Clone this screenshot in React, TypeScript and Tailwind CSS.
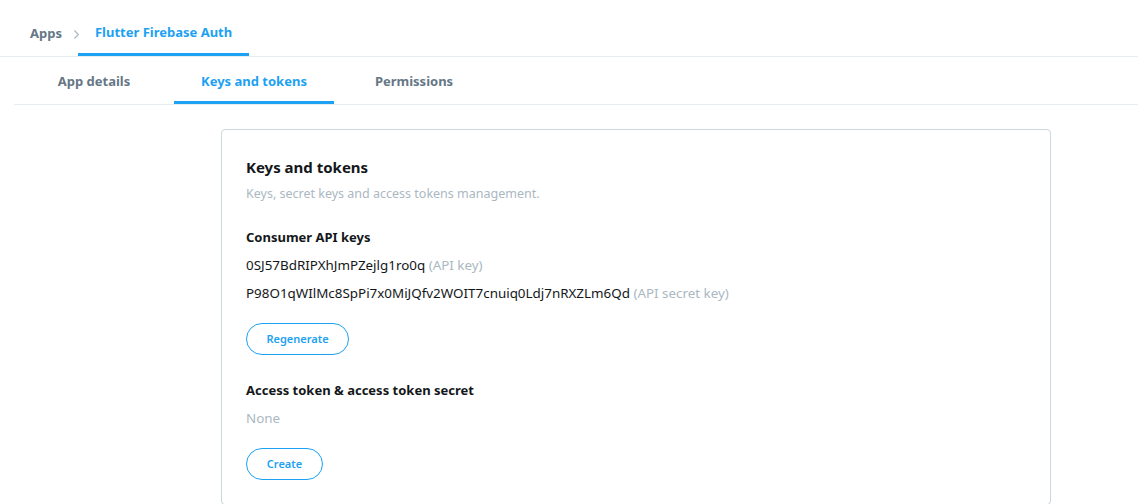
import { ChevronRight } from "lucide-react";

const tabs = ["App details", "Keys and tokens", "Permissions"];

export default function App() {
  return (
    <div className="min-h-[504px] bg-white font-['Noto_Sans',sans-serif] text-[#14171a]">
      {/* breadcrumb */}
      <div className="flex h-[57px] items-stretch border-b border-[#e6ecf0] pl-[30px]">
        <div className="flex items-center pt-[12px] text-[13px] font-bold text-[#657786]">Apps</div>
        <div className="mr-[-6px] flex items-center pl-[7px] pt-[12px] text-[#aab8c2]">
          <ChevronRight className="h-[15px] w-[15px]" strokeWidth={1.75} />
        </div>
        <div className="flex items-center border-b-[3px] border-[#1da1f2] px-[17px] pt-[12px] text-[13px] font-bold text-[#1da1f2]">
          Flutter Firebase Auth
        </div>
      </div>

      {/* tabs */}
      <div className="ml-[14px] flex h-[48px] border-b border-[#e6ecf0]">
        {tabs.map((t) => (
          <div
            key={t}
            className={
              t === "Keys and tokens"
                ? "flex w-[160px] items-center justify-center border-b-[3px] border-[#1da1f2] pt-[5px] text-[13px] font-bold text-[#1da1f2]"
                : "flex w-[160px] items-center justify-center pt-[2px] text-[13px] font-bold text-[#657786]"
            }
          >
            {t}
          </div>
        ))}
      </div>

      {/* card */}
      <div className="ml-[221px] mt-[24px] w-[830px] rounded-[4px] border border-[#ccd6dd] px-[24px] pt-[26px] pb-[24px]">
        <h2 className="text-[15px] font-bold leading-[22px]">Keys and tokens</h2>
        <p className="mt-[7px] text-[12.5px] leading-[18px] text-[#aab8c2]">
          Keys, secret keys and access tokens management.
        </p>

        <h3 className="mt-[24px] text-[13px] font-bold leading-[20px]">Consumer API keys</h3>
        <div className="mt-[8px] text-[13.4px] leading-[20px]">
          0SJ57BdRIPXhJmPZejlg1ro0q <span className="text-[#aab8c2]">(API key)</span>
        </div>
        <div className="mt-[8px] text-[13.4px] leading-[20px]">
          P98O1qWIlMc8SpPi7x0MiJQfv2WOIT7cnuiq0Ldj7nRXZLm6Qd{" "}
          <span className="text-[#aab8c2]">(API secret key)</span>
        </div>

        <button
          type="button"
          className="mt-[20px] h-[32px] w-[103px] rounded-full border border-[#1da1f2] text-[11px] font-semibold text-[#1da1f2]"
        >
          Regenerate
        </button>

        <h3 className="mt-[25px] text-[13px] font-bold leading-[20px]">
          Access token &amp; access token secret
        </h3>
        <div className="mt-[8px] text-[13.4px] leading-[20px] text-[#aab8c2]">None</div>

        <button
          type="button"
          className="mt-[20px] h-[32px] w-[77px] rounded-full border border-[#1da1f2] text-[11px] font-semibold text-[#1da1f2]"
        >
          Create
        </button>
      </div>
    </div>
  );
}
